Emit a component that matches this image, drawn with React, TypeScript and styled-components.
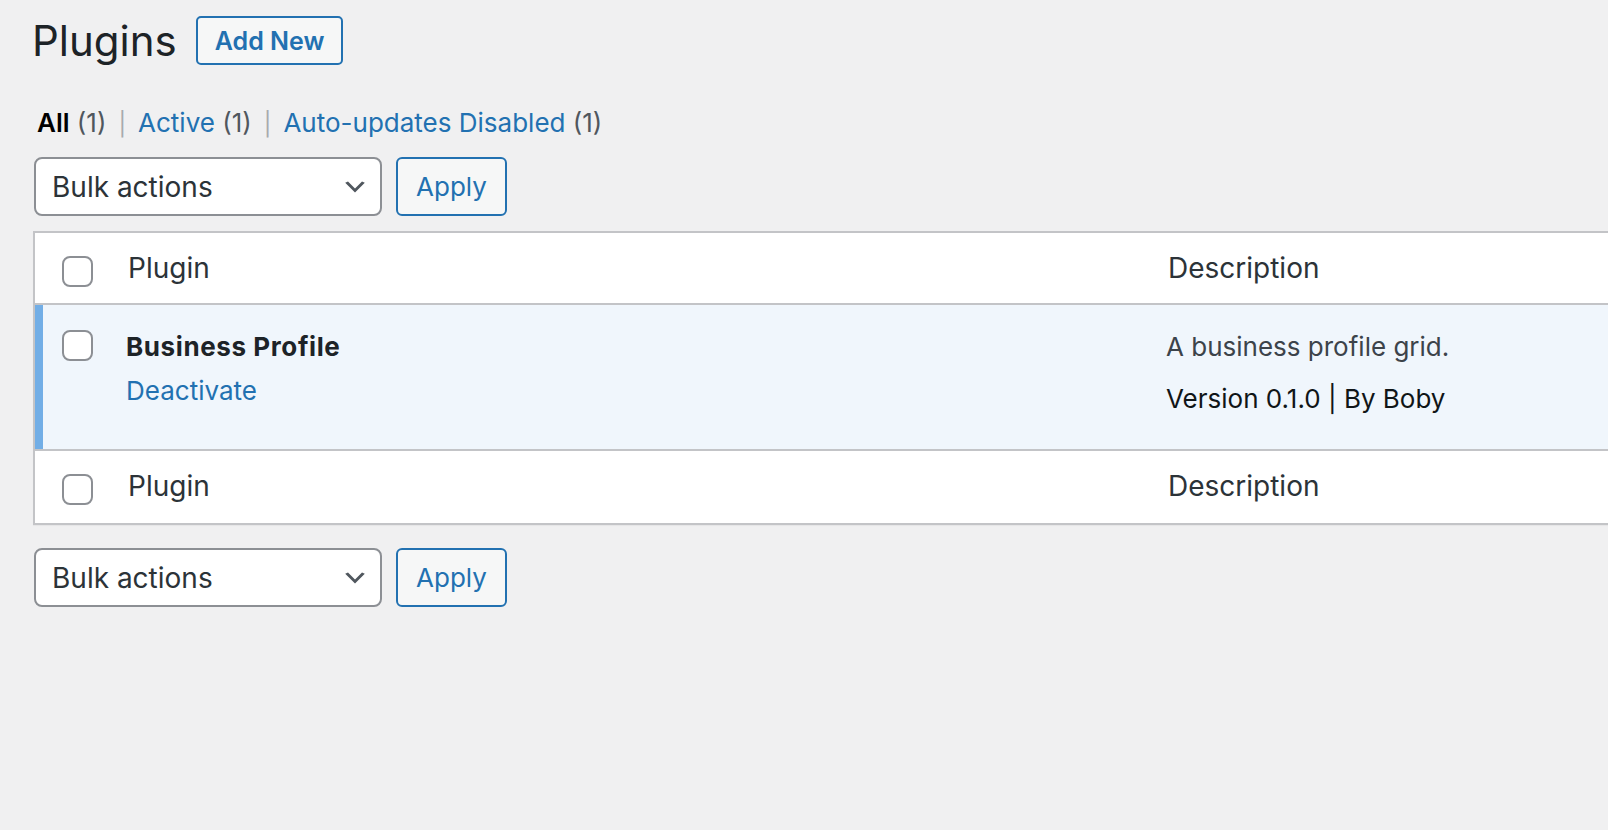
import React from 'react';
import styled, { createGlobalStyle } from 'styled-components';

const GlobalStyle = createGlobalStyle`
    * {
        box-sizing: border-box;
    }

    html,
    body {
        margin: 0;
        padding: 0;
        background: #f0f0f1;
        overflow: hidden;
    }

    body {
        font-family: Inter, "Liberation Sans", sans-serif;
        color: #3c434a;
        -webkit-font-smoothing: antialiased;
    }
`;

const Wrap = styled.div`
    padding: 16px 0 0 33px;
`;

const HeadingRow = styled.div`
    display: flex;
    align-items: center;
    gap: 19px;
    height: 49px;
`;

const Title = styled.h1`
    margin: 0 0 0 -1px;
    font-size: 42px;
    font-weight: 400;
    line-height: 1;
    color: #1d2327;
`;

const OutlineButton = styled.button`
    display: inline-flex;
    align-items: center;
    justify-content: center;
    border: 2px solid #2271b1;
    background: #f6f7f7;
    color: #2271b1;
    font-family: inherit;
    cursor: pointer;
    padding: 0;
`;

const AddNewButton = styled(OutlineButton)`
    height: 49px;
    padding: 0 17px;
    border-radius: 5px;
    font-size: 25px;
    font-weight: 600;
`;

const ApplyButton = styled(OutlineButton)`
    width: 111px;
    height: 59px;
    border-radius: 6px;
    font-size: 26px;
    font-weight: 400;
`;

const Filters = styled.ul`
    display: flex;
    height: 36px;
    margin: 40px 0 0 4px;
    padding: 0;
    list-style: none;
    font-size: 26px;
    line-height: 36px;
    color: #50575e;
`;

const FilterItem = styled.li`
    display: flex;
    align-items: baseline;
    height: 36px;
    white-space: pre;
`;

const FilterLink = styled.a<{ $current?: boolean }>`
    color: ${props => (props.$current ? '#000' : '#2271b1')};
    font-weight: ${props => (props.$current ? 600 : 400)};
    text-decoration: none;
`;

const Count = styled.span`
    color: #50575e;
`;

const Sep = styled.span`
    color: #a7aaad;
    font-size: 23px;
    padding: 0 12px;
`;

const TableNav = styled.div<{ $bottom?: boolean }>`
    display: flex;
    gap: 14px;
    margin-top: ${props => (props.$bottom ? '23px' : '16px')};
    padding-left: 1px;
`;

const SelectBox = styled.div`
    width: 348px;
    height: 59px;
    display: flex;
    align-items: center;
    justify-content: space-between;
    padding: 0 11px 0 16px;
    border: 2px solid #8c8f94;
    border-radius: 8px;
    background: #fff;
    font-size: 28px;
    color: #2c3338;
`;

const Table = styled.div`
    width: 1700px;
    margin-top: 15px;
    border: 2px solid #c3c4c7;
    background: #fff;
    box-shadow: 0 1px 1px rgba(0, 0, 0, 0.04);
`;

const Row = styled.div<{ $active?: boolean }>`
    display: grid;
    grid-template-columns: 91px 1040px 1fr;
    background: ${props => (props.$active ? '#f0f6fc' : '#fff')};
    border-bottom: 2px solid #c3c4c7;

    &:last-child {
        border-bottom: none;
    }
`;

const CheckCell = styled.div<{ $active?: boolean; $top: number }>`
    padding: ${props => props.$top}px 0 0 27px;
    box-shadow: ${props => (props.$active ? 'inset 8px 0 0 #72aee6' : 'none')};
`;

const Checkbox = styled.input.attrs({ type: 'checkbox' })`
    appearance: none;
    display: block;
    margin: 0;
    width: 31px;
    height: 31px;
    border: 2px solid #8c8f94;
    border-radius: 8px;
    background: #fff;
`;

const HeadCell = styled.div<{ $footer?: boolean }>`
    padding: 17px 0 ${props => (props.$footer ? '19px' : '17px')} 2px;
    font-size: 28px;
    line-height: 36px;
    color: #2c3338;
`;

const NameCell = styled.div`
    padding-top: 22px;
    font-size: 26px;
    line-height: 39px;
`;

const PluginName = styled.strong`
    display: block;
    font-weight: 700;
    letter-spacing: 0.6px;
    color: #1d2327;
`;

const RowActions = styled.div`
    margin-top: 5px;

    a {
        color: #2271b1;
        text-decoration: none;
    }
`;

const DescCell = styled.div`
    padding: 22px 0 31px;
    font-size: 26px;
    line-height: 39px;
`;

const DescText = styled.p`
    margin: 0;
    color: #3c434a;
`;

const Version = styled.div`
    margin-top: 13px;
    color: #101517;
`;

const Chevron = () => (
    <svg width="28" height="28" viewBox="0 0 20 20" aria-hidden="true">
        <path d="M5 6l5 5 5-5 2 1-7 7-7-7 2-1z" fill="#50575e" />
    </svg>
);

const BulkActions = ({ bottom }: { bottom?: boolean }) => (
    <TableNav $bottom={bottom}>
        <SelectBox>
            <span>Bulk actions</span>
            <Chevron />
        </SelectBox>
        <ApplyButton>Apply</ApplyButton>
    </TableNav>
);

const HeaderRow = ({ footer }: { footer?: boolean }) => (
    <Row>
        <CheckCell $top={23}>
            <Checkbox />
        </CheckCell>
        <HeadCell $footer={footer}>Plugin</HeadCell>
        <HeadCell $footer={footer}>Description</HeadCell>
    </Row>
);

const filters = [
    { label: 'All', count: 1, current: true },
    { label: 'Active', count: 1 },
    { label: 'Auto-updates Disabled', count: 1 },
];

const App = () => {
    return (
        <Wrap>
            <GlobalStyle />
            <HeadingRow>
                <Title>Plugins</Title>
                <AddNewButton>Add New</AddNewButton>
            </HeadingRow>

            <Filters>
                {filters.map((filter, index) => (
                    <FilterItem key={filter.label}>
                        <FilterLink href="#" $current={filter.current}>
                            {filter.label}
                        </FilterLink>
                        <Count> ({filter.count})</Count>
                        {index < filters.length - 1 && <Sep>|</Sep>}
                    </FilterItem>
                ))}
            </Filters>

            <BulkActions />

            <Table>
                <HeaderRow />
                <Row $active>
                    <CheckCell $active $top={25}>
                        <Checkbox />
                    </CheckCell>
                    <NameCell>
                        <PluginName>Business Profile</PluginName>
                        <RowActions>
                            <a href="#">Deactivate</a>
                        </RowActions>
                    </NameCell>
                    <DescCell>
                        <DescText>A business profile grid.</DescText>
                        <Version>Version 0.1.0 | By Boby</Version>
                    </DescCell>
                </Row>
                <HeaderRow footer />
            </Table>

            <BulkActions bottom />
        </Wrap>
    );
};

export default App;
